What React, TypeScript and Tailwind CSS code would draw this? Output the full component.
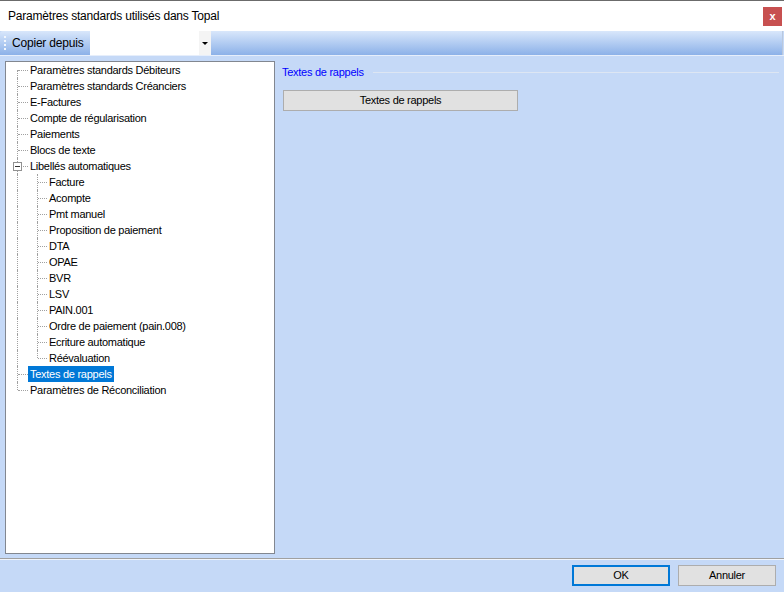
import React from "react";

type Item = { label: string; level: 0 | 1; expander?: boolean; selected?: boolean };

const items: Item[] = [
  { label: "Paramètres standards Débiteurs", level: 0 },
  { label: "Paramètres standards Créanciers", level: 0 },
  { label: "E-Factures", level: 0 },
  { label: "Compte de régularisation", level: 0 },
  { label: "Paiements", level: 0 },
  { label: "Blocs de texte", level: 0 },
  { label: "Libellés automatiques", level: 0, expander: true },
  { label: "Facture", level: 1 },
  { label: "Acompte", level: 1 },
  { label: "Pmt manuel", level: 1 },
  { label: "Proposition de paiement", level: 1 },
  { label: "DTA", level: 1 },
  { label: "OPAE", level: 1 },
  { label: "BVR", level: 1 },
  { label: "LSV", level: 1 },
  { label: "PAIN.001", level: 1 },
  { label: "Ordre de paiement (pain.008)", level: 1 },
  { label: "Ecriture automatique", level: 1 },
  { label: "Réévaluation", level: 1 },
  { label: "Textes de rappels", level: 0, selected: true },
  { label: "Paramètres de Réconciliation", level: 0 },
];

function Row({ item, index }: { item: Item; index: number }) {
  const first = index === 0;
  const lastTop = index === items.length - 1;
  const lastChild = item.level === 1 && items[index + 1]?.level !== 1;
  return (
    <div className="flex h-[16px] items-center">
      <div className="relative h-full w-[22px] shrink-0">
        <div
          className={
            "absolute left-[11px] w-0 border-l border-dotted border-[#a0a0a0] " +
            (first ? "top-[8px] bottom-0" : lastTop ? "top-0 h-[8px]" : "top-0 bottom-0")
          }
        />
        {item.level === 0 && (
          <div className="absolute left-[12px] top-[8px] h-0 w-[10px] border-t border-dotted border-[#a0a0a0]" />
        )}
        {item.expander && (
          <div className="absolute left-[7px] top-[4px] flex h-[9px] w-[9px] items-center justify-center border border-[#919191] bg-white">
            <div className="h-px w-[5px] bg-[#333]" />
          </div>
        )}
      </div>
      {item.level === 1 && (
        <div className="relative h-full w-[19px] shrink-0">
          <div
            className={
              "absolute left-[9px] w-0 border-l border-dotted border-[#a0a0a0] " +
              (lastChild ? "top-0 h-[8px]" : "top-0 bottom-0")
            }
          />
          <div className="absolute left-[10px] top-[8px] h-0 w-[9px] border-t border-dotted border-[#a0a0a0]" />
        </div>
      )}
      <div
        className={
          "h-[16px] whitespace-nowrap px-[2px] leading-[16px] " +
          (item.selected ? "bg-[#0078d7] text-white" : "text-black")
        }
      >
        {item.label}
      </div>
    </div>
  );
}

export default function App() {
  return (
    <div
      className="flex h-[592px] w-[784px] flex-col overflow-hidden bg-[#c5d9f7] text-[11px] tracking-[-0.27px]"
      style={{ fontFamily: '"Liberation Sans", Arial, sans-serif' }}
    >
      {/* Title bar */}
      <div className="flex h-[31px] shrink-0 items-center justify-between border-t border-[#6b6b6b] bg-white pl-[8px] pr-[2px]">
        <span className="text-[12px] tracking-[-0.2px] text-black">Paramètres standards utilisés dans Topal</span>
        <div className="flex h-[19px] w-[19px] items-center justify-center bg-[#c75050] text-[11px] font-bold leading-none text-white">
          x
        </div>
      </div>

      {/* Toolbar */}
      <div className="mr-[1px] flex h-[24px] shrink-0 items-stretch rounded-tl-[3px] border-r border-[#b9c8de] bg-gradient-to-b from-[#d9e7fb] to-[#8cb1e8]">
        <div className="flex w-[8px] flex-col items-center justify-center gap-[2px] pl-[1px]">
          <div className="h-[2px] w-[2px] bg-[#f2f6fc]" />
          <div className="h-[2px] w-[2px] bg-[#f2f6fc]" />
          <div className="h-[2px] w-[2px] bg-[#f2f6fc]" />
          <div className="h-[2px] w-[2px] bg-[#f2f6fc]" />
        </div>
        <div className="flex w-[82px] items-center pl-[4px] text-[12px] tracking-[-0.2px] text-black">Copier depuis</div>
        <div className="flex w-[121px] items-stretch bg-white">
          <div className="flex-1" />
          <div className="flex w-[12px] items-center justify-center bg-[#f4f4f4]">
            <div className="h-0 w-0 border-l-[3px] border-r-[3px] border-t-[3px] border-l-transparent border-r-transparent border-t-black" />
          </div>
        </div>
      </div>
      <div className="h-px shrink-0 bg-[#e6eefb]" />

      {/* Body */}
      <div className="flex flex-1 gap-[8px] px-[5px] pb-[4px] pt-[5px]">
        <div className="w-[270px] shrink-0 border border-[#828790] bg-white">
          {items.map((it, i) => (
            <Row key={i} item={it} index={i} />
          ))}
        </div>
        <div className="flex flex-1 flex-col">
          <div className="flex h-[22px] items-center">
            <span className="-ml-[1px] whitespace-nowrap text-[#0000ff]">Textes de rappels</span>
            <div className="ml-[9px] h-px flex-1 bg-[#dde6f3]" />
          </div>
          <div className="mt-[7px] flex h-[21px] w-[235px] items-center justify-center border border-[#adadad] bg-[#e1e1e1] text-black">
            Textes de rappels
          </div>
        </div>
      </div>

      {/* Footer */}
      <div className="h-px shrink-0 bg-[#a0a0a0]" />
      <div className="h-px shrink-0 bg-[#f0f5fd]" />
      <div className="flex h-[32px] shrink-0 items-start justify-end gap-[8px] pr-[8px] pt-[5px]">
        <div className="flex h-[21px] w-[98px] items-center justify-center border-2 border-[#0078d7] bg-[#e1e1e1] text-black">
          OK
        </div>
        <div className="flex h-[21px] w-[98px] items-center justify-center border border-[#adadad] bg-[#e1e1e1] text-black">
          Annuler
        </div>
      </div>
    </div>
  );
}
